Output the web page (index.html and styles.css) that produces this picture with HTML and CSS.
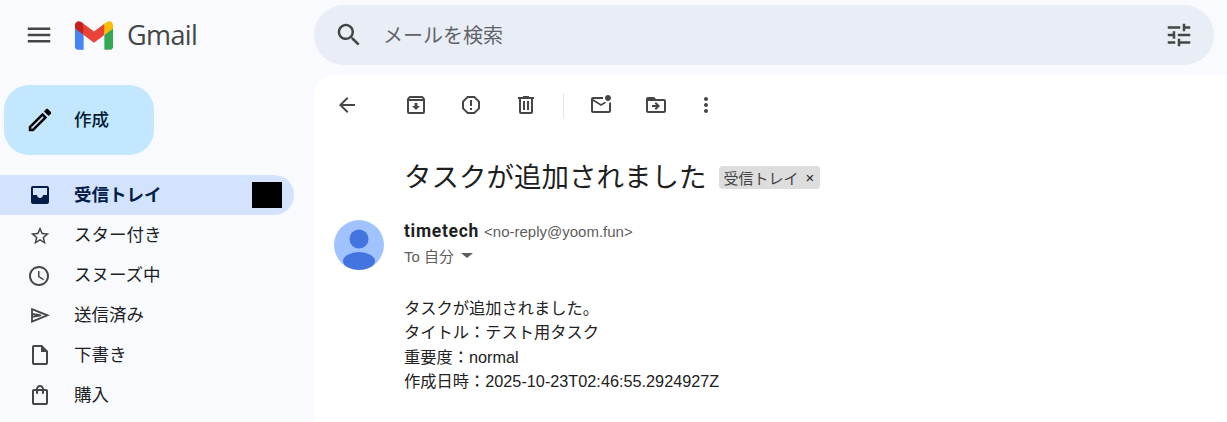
FILE: index.html
```html
<!DOCTYPE html>
<html lang="ja">
<head>
    <meta charset="UTF-8">
    <meta name="viewport" content="width=device-width, initial-scale=1.0">
    <title>Gmail</title>
    <link rel="stylesheet" href="styles.css">
</head>
<body>
    <!-- Top bar -->
    <header class="topbar">
        <div class="brand">
            <svg class="icon-lg menu-icon" viewBox="0 0 24 24"><path d="M3 18h18v-2H3v2zm0-5h18v-2H3v2zm0-7v2h18V6H3z"/></svg>
            <svg class="gmail-logo" viewBox="0 0 256 193">
                <path fill="#4285F4" d="M58.182 192.05V93.14L27.507 65.077 0 49.504v125.091c0 9.658 7.825 17.455 17.455 17.455h40.727Z"/>
                <path fill="#34A853" d="M197.818 192.05h40.727c9.659 0 17.455-7.826 17.455-17.455V49.505l-31.156 17.837-27.026 25.798v98.91Z"/>
                <path fill="#EA4335" d="m58.182 93.14-4.174-38.647 4.174-36.989L128 69.868l69.818-52.364 4.669 34.992-4.669 40.644L128 145.504z"/>
                <path fill="#FBBC04" d="M197.818 17.504V93.14L256 49.504V26.231c0-21.585-24.64-33.89-41.89-20.945l-16.292 12.218Z"/>
                <path fill="#C5221F" d="m0 49.504 26.759 20.07L58.182 93.14V17.504L41.89 5.286C24.61-7.66 0 4.646 0 26.23v23.273Z"/>
            </svg>
            <span class="brand-name">Gmail</span>
        </div>
        <div class="search">
            <svg class="icon-lg" viewBox="0 0 24 24"><path d="M15.5 14h-.79l-.28-.27C15.41 12.59 16 11.11 16 9.5 16 5.91 13.09 3 9.5 3S3 5.91 3 9.5 5.91 16 9.5 16c1.61 0 3.09-.59 4.23-1.57l.27.28v.79l5 4.99L20.49 19l-4.99-5zm-6 0C7.01 14 5 11.99 5 9.5S7.01 5 9.5 5 14 7.01 14 9.5 11.99 14 9.5 14z"/></svg>
            <span class="search-text">メールを検索</span>
            <svg class="icon-lg" viewBox="0 0 24 24"><path d="M3 17v2h6v-2H3zM3 5v2h10V5H3zm10 16v-2h8v-2h-8v-2h-2v6h2zM7 9v2H3v2h4v2h2V9H7zm14 4v-2H11v2h10zm-6-4h2V7h4V5h-4V3h-2v6z"/></svg>
        </div>
    </header>

    <div class="layout">
        <!-- Sidebar -->
        <aside class="sidebar">
            <div class="compose">
                <svg class="icon-lg compose-icon" viewBox="0 0 24 24"><path d="M3 17.25V21h3.75L17.81 9.94l-3.75-3.75L3 17.25zM5.92 19H5v-.92l9.06-9.06.92.92L5.92 19zM20.71 7.04c.39-.39.39-1.02 0-1.41l-2.34-2.34c-.39-.39-1.02-.39-1.41 0l-1.83 1.83 3.75 3.75 1.83-1.83z"/></svg>
                <span class="compose-label">作成</span>
            </div>
            <nav class="nav">
                <div class="nav-item active">
                    <svg class="icon" viewBox="0 0 24 24"><path d="M19 3H5c-1.1 0-2 .9-2 2v14c0 1.1.9 2 2 2h14c1.1 0 2-.9 2-2V5c0-1.1-.9-2-2-2zm0 9h-4c0 1.66-1.35 3-3 3s-3-1.34-3-3H5V5h14v7z"/></svg>
                    <span class="nav-label">受信トレイ</span>
                    <span class="redacted"></span>
                </div>
                <div class="nav-item">
                    <svg class="icon" viewBox="-1 -2 26 26"><path d="M22 9.24l-7.19-.62L12 2 9.19 8.63 2 9.24l5.46 4.73L5.82 21 12 17.27 18.18 21l-1.63-7.03L22 9.24zM12 15.4l-3.76 2.27 1-4.28-3.32-2.88 4.38-.38L12 6.1l1.71 4.04 4.38.38-3.32 2.88 1 4.28L12 15.4z"/></svg>
                    <span class="nav-label">スター付き</span>
                </div>
                <div class="nav-item">
                    <svg class="icon" viewBox="1 -1 24 24"><path d="M11.99 2C6.47 2 2 6.48 2 12s4.47 10 9.99 10C17.52 22 22 17.52 22 12S17.52 2 11.99 2zM12 20c-4.42 0-8-3.58-8-8s3.58-8 8-8 8 3.58 8 8-3.58 8-8 8zm.5-13H11v6l5.25 3.15.75-1.23-4.5-2.67z"/></svg>
                    <span class="nav-label">スヌーズ中</span>
                </div>
                <div class="nav-item">
                    <svg class="icon send-icon" viewBox="0 0 24 24"><path d="M4 6.2 19.5 12.3 4 18.6ZM4 10.8 13 12.3 4 13.8"/></svg>
                    <span class="nav-label">送信済み</span>
                </div>
                <div class="nav-item">
                    <svg class="icon" viewBox="0 0 24 24"><path d="M14 2H6c-1.1 0-2 .9-2 2v16c0 1.1.9 2 2 2h12c1.1 0 2-.9 2-2V8l-6-6zM6 20V4h7v5h5v11H6z"/></svg>
                    <span class="nav-label">下書き</span>
                </div>
                <div class="nav-item">
                    <svg class="icon" viewBox="0 0 24 24"><path d="M18 6h-2c0-2.21-1.79-4-4-4S8 3.79 8 6H6c-1.1 0-2 .9-2 2v12c0 1.1.9 2 2 2h12c1.1 0 2-.9 2-2V8c0-1.1-.9-2-2-2zm-6-2c1.1 0 2 .9 2 2h-4c0-1.1.9-2 2-2zm6 16H6V8h2v2c0 .55.45 1 1 1s1-.45 1-1V8h4v2c0 .55.45 1 1 1s1-.45 1-1V8h2v12z"/></svg>
                    <span class="nav-label">購入</span>
                </div>
            </nav>
        </aside>

        <!-- Message -->
        <main class="panel">
            <div class="toolbar">
                <div class="tool tool-back"><svg class="icon" viewBox="0 0 24 24"><path d="M20 11H7.83l5.59-5.59L12 4l-8 8 8 8 1.41-1.41L7.83 13H20v-2z"/></svg></div>
                <div class="tool"><svg class="icon" viewBox="0 0 24 24"><path d="M20.54 5.23l-1.39-1.68C18.88 3.21 18.47 3 18 3H6c-.47 0-.88.21-1.16.55L3.46 5.23C3.17 5.57 3 6.02 3 6.5V19c0 1.1.9 2 2 2h14c1.1 0 2-.9 2-2V6.5c0-.48-.17-.93-.46-1.27zM6.24 5h11.52l.81.97H5.44l.8-.97zM5 19V8h14v11H5zm8.45-9h-2.9v3H8l4 4 4-4h-2.55z"/></svg></div>
                <div class="tool"><svg class="icon" viewBox="0 0 24 24"><path d="M15.73 3H8.27L3 8.27v7.46L8.27 21h7.46L21 15.73V8.27L15.73 3zM19 14.9L14.9 19H9.1L5 14.9V9.1L9.1 5h5.8L19 9.1v5.8zM11 7h2v6h-2zM11 15h2v2h-2z"/></svg></div>
                <div class="tool"><svg class="icon" viewBox="0 0 24 24"><path d="M15 4V3H9v1H4v2h1v13c0 1.1.9 2 2 2h10c1.1 0 2-.9 2-2V6h1V4h-5zm2 15H7V6h10v13zM9 8h2v9H9zm4 0h2v9h-2z"/></svg></div>
                <div class="tool-divider"></div>
                <div class="tool"><svg class="icon" viewBox="0 0 24 24"><path d="M22 8.98V18c0 1.1-.9 2-2 2H4c-1.1 0-2-.9-2-2V6c0-1.1.9-2 2-2h10.1c-.06.32-.1.66-.1 1s.04.68.1 1H4l8 5 3.67-2.29c.47.43 1.02.76 1.63.98L12 13 4 8v10h16V9.9c.74-.15 1.42-.48 2-.92zM16 5c0 1.66 1.34 3 3 3s3-1.34 3-3-1.34-3-3-3-3 1.34-3 3z"/></svg></div>
                <div class="tool"><svg class="icon" viewBox="0 0 24 24"><path d="M20 6h-8l-2-2H4c-1.1 0-1.99.9-1.99 2L2 18c0 1.1.9 2 2 2h16c1.1 0 2-.9 2-2V8c0-1.1-.9-2-2-2zm0 12H4V8h16v10zm-8.01-9l-1.41 1.41L12.16 12H8v2h4.16l-1.59 1.59L11.99 17 16 13.01 11.99 9z"/></svg></div>
                <div class="tool tool-more"><svg class="icon" viewBox="0 0 24 24"><path d="M12 8c1.1 0 2-.9 2-2s-.9-2-2-2-2 .9-2 2 .9 2 2 2zm0 2c-1.1 0-2 .9-2 2s.9 2 2 2 2-.9 2-2-.9-2-2-2zm0 6c-1.1 0-2 .9-2 2s.9 2 2 2 2-.9 2-2-.9-2-2-2z"/></svg></div>
            </div>

            <div class="subject">
                <h1 class="subject-text">タスクが追加されました</h1>
                <span class="chip">受信トレイ<span class="chip-close">×</span></span>
            </div>

            <div class="message">
                <svg class="avatar" viewBox="0 0 50 50">
                    <circle cx="25" cy="25" r="25" fill="#a0c3ff"/>
                    <circle cx="25" cy="19" r="9.5" fill="#4374e0"/>
                    <ellipse cx="25" cy="41" rx="16" ry="9" fill="#4374e0"/>
                </svg>
                <div class="message-main">
                    <div class="sender"><span class="sender-name">timetech</span> <span class="sender-mail">&lt;no-reply@yoom.fun&gt;</span></div>
                    <div class="recipient">To 自分<span class="caret"></span></div>
                    <div class="message-body">
                        <p>タスクが追加されました。</p>
                        <p>タイトル：テスト用タスク</p>
                        <p>重要度：normal</p>
                        <p>作成日時：2025-10-23T02:46:55.2924927Z</p>
                    </div>
                </div>
            </div>
        </main>
    </div>
</body>
</html>
```

FILE: styles.css
```css
* {
    box-sizing: border-box;
}

body {
    margin: 0;
    height: 422px;
    overflow: hidden;
    background-color: #f8fafd;
    font-family: Roboto, "Noto Sans CJK JP", sans-serif;
    color: #222;
}

svg {
    flex-shrink: 0;
    display: block;
}

.icon {
    width: 24px;
    height: 24px;
    fill: #444746;
}

.icon-lg {
    width: 30px;
    height: 30px;
    fill: #444746;
}

.send-icon {
    fill: none;
    stroke: #444746;
    stroke-width: 1.8;
}

/* Top bar */
.topbar {
    display: flex;
    height: 75px;
    padding: 5px 13px 10px 0;
}

.brand {
    width: 314px;
    display: flex;
    align-items: center;
    padding-left: 24px;
}

.gmail-logo {
    width: 38px;
    height: 29px;
    margin-left: 21px;
}

.brand-name {
    margin-left: 14px;
    margin-bottom: 2px;
    font-family: "Open Sans", sans-serif;
    font-size: 27px;
    color: #444746;
    letter-spacing: -0.6px;
}

.search {
    flex: 1;
    display: flex;
    align-items: center;
    padding: 0 20px;
    background-color: #e9eef6;
    border-radius: 30px;
}

.search-text {
    flex: 1;
    margin-left: 19px;
    margin-bottom: 2px;
    font-size: 20px;
    color: #5f6368;
}

.layout {
    display: flex;
    height: 347px;
}

/* Sidebar */
.sidebar {
    width: 314px;
    padding-top: 10px;
}

.compose {
    width: 150px;
    height: 70px;
    margin-left: 4px;
    padding-left: 21px;
    display: flex;
    align-items: center;
    gap: 19px;
    background-color: #c2e7ff;
    border-radius: 25px;
    font-size: 17.5px;
    font-weight: 500;
    color: #001d35;
}

.compose-icon {
    margin-bottom: 1px;
    fill: #000;
}

.compose-label {
    margin-bottom: 4px;
}

.nav {
    margin-top: 20px;
    width: 294px;
}

.nav-item {
    height: 40px;
    display: flex;
    align-items: center;
    padding-left: 28px;
    font-size: 17.5px;
    color: #1f1f1f;
}

.nav-label {
    flex: 1;
    margin-left: 22px;
    margin-bottom: 4px;
}

.nav-item.active {
    background-color: #d3e3fd;
    border-radius: 0 20px 20px 0;
    font-weight: 700;
    color: #041e49;
}

.nav-item.active .icon {
    fill: #041e49;
}

.redacted {
    width: 30px;
    height: 26px;
    margin-right: 12px;
    background-color: #000;
}

/* Message panel */
.panel {
    flex: 1;
    background-color: #fff;
    border-radius: 20px 0 0 0;
}

.toolbar {
    height: 60px;
    display: flex;
    align-items: center;
    padding-left: 8px;
}

.tool {
    width: 55px;
    display: flex;
    justify-content: center;
}

.tool-back {
    width: 50px;
    margin-right: 16px;
}

.tool-divider {
    width: 1px;
    height: 25px;
    margin: 0 9px 0 10px;
    background-color: #e6e6e6;
}

.tool-more {
    width: 45px;
}

.subject {
    height: 42px;
    margin-top: 19px;
    padding-left: 90px;
    display: flex;
    align-items: center;
    gap: 12px;
}

.subject-text {
    margin: 0;
    font-size: 27.5px;
    font-weight: 400;
    color: #1f1f1f;
}

.chip {
    height: 23px;
    margin-top: 4px;
    padding: 0 6px 0 5px;
    display: flex;
    align-items: center;
    background-color: #dddddd;
    border-radius: 4px;
    font-size: 15px;
    color: #444;
}

.chip-close {
    margin-left: 7px;
    font-family: "Liberation Sans", sans-serif;
    font-size: 15px;
    color: #222;
}

.message {
    display: flex;
    margin-top: 24px;
    padding-left: 20px;
    gap: 20px;
}

.avatar {
    width: 50px;
    height: 50px;
}

.sender {
    height: 24px;
    margin-top: -1px;
    line-height: 24px;
    white-space: nowrap;
}

.sender-name {
    font-size: 17.5px;
    font-weight: 700;
    letter-spacing: 0.7px;
    margin-right: 1px;
    color: #1f1f1f;
}

.sender-mail {
    font-family: "Liberation Sans", sans-serif;
    font-size: 15px;
    color: #5e5e5e;
}

.recipient {
    height: 26px;
    margin-top: -1px;
    display: flex;
    align-items: center;
    font-family: "Liberation Sans", "Noto Sans CJK JP", sans-serif;
    font-size: 15px;
    color: #5e5e5e;
}

.caret {
    width: 0;
    height: 0;
    margin-left: 7px;
    border-left: 6px solid transparent;
    border-right: 6px solid transparent;
    border-top: 5px solid #5e5e5e;
}

.message-body {
    margin-top: 28px;
    font-family: "Liberation Sans", "Noto Sans CJK JP", sans-serif;
    font-size: 16.25px;
    line-height: 24.4px;
    color: #222;
}

.message-body p {
    margin: 0;
}
```
